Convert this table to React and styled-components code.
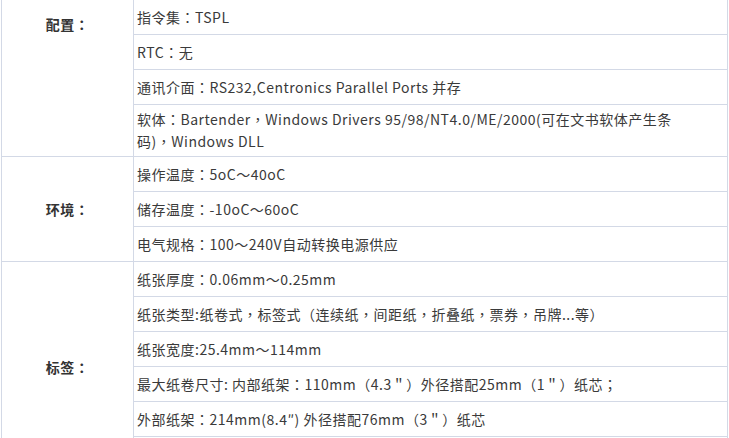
import React from "react";
import styled, { createGlobalStyle } from "styled-components";

const GlobalStyle = createGlobalStyle`
  html, body {
    margin: 0;
    padding: 0;
    background: #fff;
    overflow: hidden;
  }
  body {
    font-family: "Microsoft YaHei", "Noto Sans CJK SC", "Noto Sans", sans-serif;
    font-size: 14px;
    color: #333;
    text-spacing-trim: space-all;
    text-autospace: no-autospace;
  }
`;

const specs = [
  {
    label: "配置：",
    top: true,
    items: [
      "指令集：TSPL",
      "RTC：无",
      "通讯介面：RS232,Centronics Parallel Ports 并存",
      ["软体：Bartender，Windows Drivers 95/98/NT4.0/ME/2000(可在文书软体产生条", "码)，Windows DLL"],
    ],
  },
  {
    label: "环境：",
    items: [
      "操作温度：5oC～40oC",
      "储存温度：-10oC～60oC",
      "电气规格：100～240V自动转换电源供应",
    ],
  },
  {
    label: "标签：",
    items: [
      "纸张厚度：0.06mm～0.25mm",
      "纸张类型:纸卷式，标签式（连续纸，间距纸，折叠纸，票券，吊牌...等）",
      "纸张宽度:25.4mm～114mm",
      "最大纸卷尺寸: 内部纸架：110mm（4.3＂）外径搭配25mm（1＂）纸芯；",
      "外部纸架：214mm(8.4″) 外径搭配76mm（3＂）纸芯",
      "",
    ],
  },
];

const Table = styled.table`
  border-collapse: collapse;
  width: 727px;
  margin: -1px 0 0 1px;
  table-layout: fixed;
`;

const LabelCell = styled.td`
  width: 130px;
  border: 1px solid #d3d9e6;
  text-align: center;
  vertical-align: ${(p) => (p.$top ? "top" : "middle")};
  padding: ${(p) => (p.$top ? "13px 4px 0" : "0 4px")};
  font-weight: bold;
  line-height: 22px;
  letter-spacing: 0.5px;
  color: #333;
`;

const ValueCell = styled.td`
  border: 1px solid #d3d9e6;
  height: 27px;
  padding: 3px 4px 4px 3px;
  line-height: 22px;
  letter-spacing: 0.5px;
  vertical-align: middle;
  color: #3a3a3a;
  white-space: nowrap;
`;

// full-width punctuation sits centred in its cell, as in the source page
const Punct = styled.span`
  font-family: "Noto Sans CJK TC", "Noto Sans CJK SC", sans-serif;
  font-feature-settings: "fwid" 1;
`;

const withPunct = (text) =>
  text.split(/([：，（）；])/).map((part, i) =>
    /^[：，（）；]$/.test(part) ? <Punct key={i}>{part}</Punct> : part
  );

const App = () => {
  return (
    <>
      <GlobalStyle />
      <Table>
        <colgroup>
          <col style={{ width: "132px" }} />
          <col />
        </colgroup>
        <tbody>
          {specs.map((group) =>
            group.items.map((item, i) => (
              <tr key={group.label + i}>
                {i === 0 && (
                  <LabelCell rowSpan={group.items.length} $top={group.top}>
                    {withPunct(group.label)}
                  </LabelCell>
                )}
                <ValueCell>
                  {Array.isArray(item)
                    ? item.map((line, j) => (
                        <React.Fragment key={j}>
                          {j > 0 && <br />}
                          {withPunct(line)}
                        </React.Fragment>
                      ))
                    : item
                    ? withPunct(item)
                    : "\u00a0"}
                </ValueCell>
              </tr>
            ))
          )}
        </tbody>
      </Table>
    </>
  );
};

export default App;
